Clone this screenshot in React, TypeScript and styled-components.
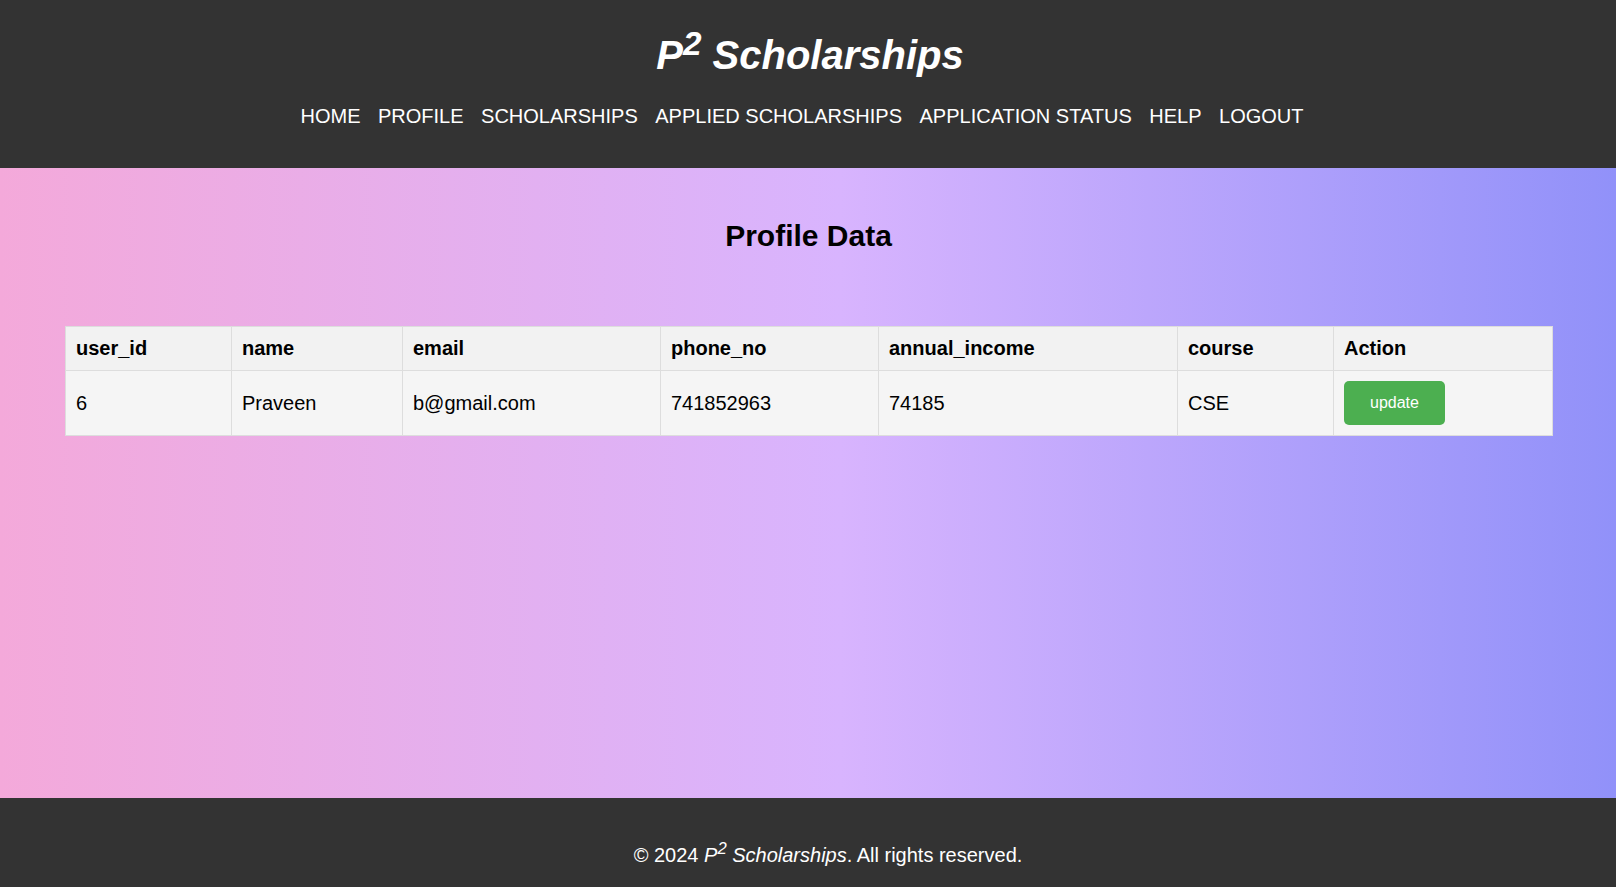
import React from "react";
import styled, { createGlobalStyle } from "styled-components";

const GlobalStyle = createGlobalStyle`
  html, body {
    margin: 0;
    padding: 0;
  }
  body {
    font-family: "Liberation Sans", Arial, sans-serif;
    color: #000;
  }
  * { box-sizing: border-box; }
`;

const Page = styled.div`
  min-height: 100vh;
  display: flex;
  flex-direction: column;
`;

const Header = styled.header`
  background: #333;
  color: #fff;
  padding: 33px 0 40px;
  text-align: center;
`;

const Title = styled.h1`
  margin: 0 0 27px;
  padding-left: 4px;
  font-size: 40px;
  font-weight: bold;
  font-style: italic;
  line-height: normal;
`;

const Sup = styled.sup`
  font-size: smaller;
  line-height: 0;
  vertical-align: super;
`;

const Nav = styled.nav`
  display: flex;
  justify-content: center;
  gap: 17.5px;
  padding-right: 12px;
`;

const NavLink = styled.a`
  color: #fff;
  text-decoration: none;
  font-size: 20px;
  line-height: 23px;
  cursor: pointer;
`;

const Main = styled.main`
  flex: 1;
  background: linear-gradient(to right, #f4a9da 0%, #d8b4fe 52%, #9191f9 100%);
  padding: 51px 64px 40px 65px;
`;

const Heading = styled.h2`
  margin: 0 0 73px;
  text-align: center;
  font-size: 30px;
  font-weight: bold;
  line-height: normal;
`;

const Table = styled.table`
  width: 100%;
  border-collapse: collapse;
  table-layout: fixed;
`;

const Th = styled.th`
  text-align: left;
  font-size: 20px;
  font-weight: bold;
  line-height: normal;
  padding: 10px;
  border: 1px solid #ddd;
  background: #f2f2f2;
`;

const Td = styled.td`
  text-align: left;
  font-size: 20px;
  line-height: normal;
  padding: 10px;
  border: 1px solid #ddd;
  background: #f5f5f5;
  vertical-align: middle;
`;

const UpdateButton = styled.button`
  background: #4caf50;
  color: #fff;
  border: none;
  border-radius: 5px;
  font-family: "Liberation Sans", Arial, sans-serif;
  font-size: 16px;
  line-height: 18px;
  padding: 13px 26px;
  cursor: pointer;
  display: block;
`;

const Footer = styled.footer`
  background: #333;
  color: #fff;
  padding: 46px 0 20px 40px;
  text-align: center;
  font-size: 20px;
  line-height: 23px;
`;

const columns = [
  { key: "user_id", width: 166 },
  { key: "name", width: 171 },
  { key: "email", width: 258 },
  { key: "phone_no", width: 218 },
  { key: "annual_income", width: 299 },
  { key: "course", width: 156 },
  { key: "Action", width: 219 },
];

const row = {
  user_id: "6",
  name: "Praveen",
  email: "b@gmail.com",
  phone_no: "741852963",
  annual_income: "74185",
  course: "CSE",
};

const navItems = [
  "HOME",
  "PROFILE",
  "SCHOLARSHIPS",
  "APPLIED SCHOLARSHIPS",
  "APPLICATION STATUS",
  "HELP",
  "LOGOUT",
];

export default function App() {
  return (
    <>
      <GlobalStyle />
      <Page>
        <Header>
          <Title>
            P<Sup>2</Sup> Scholarships
          </Title>
          <Nav>
            {navItems.map((item) => (
              <NavLink key={item}>{item}</NavLink>
            ))}
          </Nav>
        </Header>
        <Main>
          <Heading>Profile Data</Heading>
          <Table>
            <colgroup>
              {columns.map((c) => (
                <col key={c.key} style={{ width: c.width }} />
              ))}
            </colgroup>
            <thead>
              <tr>
                {columns.map((c) => (
                  <Th key={c.key}>{c.key}</Th>
                ))}
              </tr>
            </thead>
            <tbody>
              <tr>
                <Td>{row.user_id}</Td>
                <Td>{row.name}</Td>
                <Td>{row.email}</Td>
                <Td>{row.phone_no}</Td>
                <Td>{row.annual_income}</Td>
                <Td>{row.course}</Td>
                <Td>
                  <UpdateButton>update</UpdateButton>
                </Td>
              </tr>
            </tbody>
          </Table>
        </Main>
        <Footer>
          © 2024{" "}
          <i>
            P<Sup>2</Sup> Scholarships
          </i>
          . All rights reserved.
        </Footer>
      </Page>
    </>
  );
}
